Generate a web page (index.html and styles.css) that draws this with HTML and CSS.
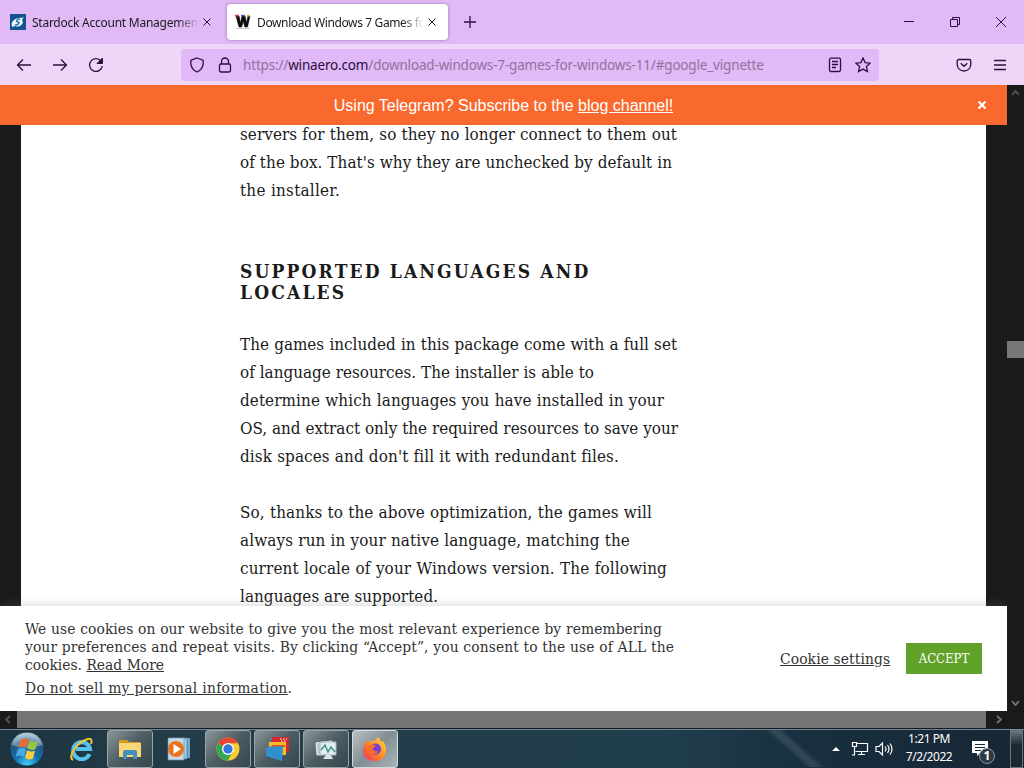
FILE: index.html
```html
<!DOCTYPE html>
<html lang="en">
<head>
  <meta charset="UTF-8" />
  <title>Download Windows 7 Games for Windows 11</title>
  <link rel="stylesheet" href="styles.css">
</head>
<body>
  <div class="tabs">
    <div class="tab">
      <svg class="favicon" viewBox="0 0 16 16"><rect width="16" height="16" fill="#12528f"/><path d="M2 12C0 8 6 3 12 4L14 3L12 6C15 10 9 14 5 12L2 13Z" fill="#e8f6fb"/><path d="M10 5C6 5 6 8 8 8S9 11 5 11" fill="none" stroke="#2379ad" stroke-width="1.5"/></svg>
      <span class="tab-title">Stardock Account Management</span>
      <svg class="close" viewBox="0 0 8 8"><path d="M.5.5l7 7m0-7l-7 7"/></svg>
    </div>
    <div class="tab active">
      <svg class="favicon" viewBox="0 0 16 16"><path d="M1 2h3l1.500 7L7 2h3l1.500 7L13 2h2l-2.500 11h-2.700L8.300 7l-1.600 6H4z" fill="#0b0b0b" stroke="#0b0b0b" stroke-width=".6"/><path d="M0 .8h4v1.700H0z" fill="#d43b45"/><path d="M6 .8h4v1.700H6z" fill="#5a4fc0"/><path d="M12 .8h3v1.700h-3z" fill="#e2b23c"/><path d="M1 14.500h14" stroke="#ccc"/></svg>
      <span class="tab-title">Download Windows 7 Games for</span>
      <svg class="close" viewBox="0 0 8 8"><path d="M.5.5l7 7m0-7l-7 7"/></svg>
    </div>
    <svg class="new-tab" viewBox="0 0 12 12"><path d="M6 0v12M0 6h12"/></svg>
    <div class="window-buttons">
      <svg viewBox="0 0 12 12"><path d="M1 5.500h10"/></svg>
      <svg viewBox="0 0 12 12"><path d="M1.500 3.500h7v7h-7zM3.500 3V1.500h7v7H9"/></svg>
      <svg viewBox="0 0 12 12"><path d="M1 1l10 10M11 1L1 11"/></svg>
    </div>
  </div>

  <div class="toolbar">
    <div class="nav">
      <svg viewBox="0 0 16 16"><path d="M15 8H1.500M7 2.500L1.500 8 7 13.500"/></svg>
      <svg viewBox="0 0 16 16"><path d="M1 8h13.500M9 2.500L14.500 8 9 13.500"/></svg>
      <svg viewBox="0 0 16 16"><path d="M13 4A6.400 6.400 0 1 0 14.300 9"/><path d="M14.500 1v5.500H9z" fill="#2b0f3d" stroke-width="1"/></svg>
    </div>
    <div class="urlbar">
      <svg viewBox="0 0 16 16"><path d="M8 1L14 3.200C15 9 12 13 8 15 4 13 1 9 2 3.200Z"/></svg>
      <svg class="lock" viewBox="0 0 16 16"><rect x="2.500" y="7" width="11" height="8" rx="1.500"/><path d="M4.500 7V4.500a3.500 3.500 0 0 1 7 0V7"/></svg>
      <span class="url">https://<b>winaero.com</b>/download-windows-7-games-for-windows-11/#google_vignette</span>
      <svg viewBox="0 0 16 16"><rect x="2.500" y="1.200" width="11" height="13.300" rx="1.500"/><path d="M5 4.500h6M5 7.500h6M5 10.500h4"/></svg>
      <svg class="star" viewBox="0 0 16 16"><path d="M8 1l2.100 4.600 5 .6-3.700 3.400 1 5L8 12.100l-4.400 2.500 1-5L.9 6.200l5-.6z"/></svg>
    </div>
    <div class="tools">
      <svg viewBox="0 0 16 16"><path d="M2.700 2.500h10.600q1.500 0 1.500 1.500v3.500a6.800 6.500 0 0 1-13.600 0V4q0-1.500 1.500-1.500zM4.700 6.300L8 9.300l3.300-3"/></svg>
      <svg viewBox="0 0 16 16"><path d="M2 3.500h12M2 8h12M2 12.500h12"/></svg>
    </div>
  </div>

  <div class="viewport">
    <div class="page">
      <div class="banner">Using Telegram? Subscribe to the&nbsp;<a>blog channel!</a>
        <svg class="banner-close" viewBox="0 0 10 10"><path d="M1.500 1.500l7 7m0-7l-7 7"/></svg>
      </div>
      <div class="article">
        <p class="first">
          <span>servers for them, so they no longer connect to them out</span>
          <span>of the box. That's why they are unchecked by default in</span>
          <span>the installer.</span>
        </p>
        <h2>Supported languages and<br>locales</h2>
        <p class="resources">
          <span>The games included in this package come with a full set</span>
          <span>of language resources. The installer is able to</span>
          <span>determine which languages you have installed in your</span>
          <span>OS, and extract only the required resources to save your</span>
          <span>disk spaces and don't fill it with redundant files.</span>
        </p>
        <p class="locales">
          <span>So, thanks to the above optimization, the games will</span>
          <span>always run in your native language, matching the</span>
          <span>current locale of your Windows version. The following</span>
          <span>languages are supported.</span>
        </p>
      </div>
      <div class="cookies">
        <div class="cookie-text">
          <p class="consent">
            <span>We use cookies on our website to give you the most relevant experience by remembering</span>
            <span>your preferences and repeat visits. By clicking “Accept”, you consent to the use of ALL the</span>
            <span>cookies. <a>Read More</a></span>
          </p>
          <p class="no-sell"><span><a>Do not sell my personal information</a>.</span></p>
        </div>
        <a class="settings">Cookie settings</a>
        <div class="accept">ACCEPT</div>
      </div>
    </div>
    <div class="vscroll">
      <svg class="dim" viewBox="0 0 9 6"><path d="M1 5l3.500-4L8 5"/></svg>
      <div class="vthumb"></div>
      <svg viewBox="0 0 9 6"><path d="M1 1l3.500 4L8 1"/></svg>
    </div>
    <div class="hscroll">
      <svg class="dim" viewBox="0 0 6 9"><path d="M5 1L1 4.500 5 8"/></svg>
      <div class="hthumb"></div>
      <svg viewBox="0 0 6 9"><path d="M1 1l4 3.500L1 8"/></svg>
    </div>
  </div>

  <div class="taskbar">
    <div class="start">
      <svg viewBox="0 0 36 36">
        <defs>
          <radialGradient id="orb" cx=".5" cy=".95" r=".9"><stop offset="0" stop-color="#3fd0f5"/><stop offset=".4" stop-color="#1470b0"/><stop offset=".75" stop-color="#24557c"/><stop offset="1" stop-color="#a9c3d2"/></radialGradient>
        </defs>
        <circle cx="18" cy="18" r="17" fill="url(#orb)" stroke="#18394f"/>
        <path d="M3 14a15.500 15.500 0 0 1 30 0Q18 20 3 14z" fill="#cde2ea" opacity=".4"/>
        <path d="M12 9q4-2.500 7.500-.5l-2 8q-4-2-8 0z" fill="#ee6a2c"/>
        <path d="M20.500 9.500q4 2.500 8.500.5l-2.500 8q-4 2-8-.5z" fill="#97c83c"/>
        <path d="M9 18q4-2 8 0l-2 8q-4-2.500-8.500-.5z" fill="#4ba9e4"/>
        <path d="M18 19q4 2.500 8 .5l-2 8q-4 2-8-.5z" fill="#fbcf3b"/>
      </svg>
    </div>
    <div class="task">
      <svg viewBox="0 0 24 24"><path d="M20.500 17A8.500 8.500 0 1 1 21 12H7" fill="none" stroke="#54c3ef" stroke-width="4"/><path d="M4 23C-2 20 8 5 19 2c4-1 4 2 3 5" fill="none" stroke="#f2c52f" stroke-width="2"/></svg>
    </div>
    <div class="task open">
      <svg viewBox="0 0 24 24"><path d="M1 3h8l2 2h11v3H1z" fill="#d79b22"/><path d="M1 6h22v14H1z" fill="#f9d676"/><path d="M5 22v-7q0-2 2-2h10q2 0 2 2v7h-4v-4H9v4z" fill="#438fc0"/></svg>
    </div>
    <div class="task">
      <svg viewBox="0 0 24 24"><path d="M9 1h14v20H9z" fill="#6fa9cc"/><path d="M5 1h15v21H5z" fill="#a4cde3" stroke="#4b7890" stroke-width=".7"/><path d="M1 1h16v22H1z" fill="#c7dce8" stroke="#688ca2" stroke-width=".7"/><circle cx="9" cy="12" r="8" fill="#e97420"/><path d="M6.500 7l7.500 5-7.500 5z" fill="#fff"/></svg>
    </div>
    <div class="task open">
      <svg viewBox="0 0 24 24"><circle cx="12" cy="12" r="11.500" fill="#f9cd31"/><path d="M12 12L2 6.200A11.500 11.500 0 0 1 22 6.200H12z" fill="#e64435"/><path d="M2 6.200A11.500 11.500 0 0 0 11.500 23.500L17 15l-5-3z" fill="#36a552"/><circle cx="12" cy="12" r="6" fill="#fff"/><circle cx="12" cy="12" r="4.700" fill="#3478e2"/></svg>
    </div>
    <div class="task open">
      <svg viewBox="0 0 24 24"><path d="M7 0h17v15H7z" fill="#d32b2d"/><path d="M15 2h7M16 4h6" stroke="#fff" stroke-dasharray="1.500 1.500"/><path d="M4 5h17v13H4z" fill="#f4bd25"/><path d="M7 8h13v2H7z" fill="#d9562b"/><path d="M1 11l6-2 2 1 9-1-1 15L1 19z" fill="#318fcd"/></svg>
    </div>
    <div class="task open">
      <svg viewBox="0 0 24 24"><path d="M2 6l16-2v13l-15 1z" fill="#b9cbd0" stroke="#eaf2f3"/><path d="M6 5h16v13H6z" fill="#e1edef" stroke="#a4b7bd"/><path d="M7 13l4-5 3 7 3-5 4 5" fill="none" stroke="#388b87" stroke-width="1.400"/><path d="M12 18h5l2 4H9z" fill="#dce6e9"/></svg>
    </div>
    <div class="task current">
      <svg viewBox="0 0 24 24">
        <defs><linearGradient id="fox" x1="1" y1="0" x2="0" y2="1"><stop offset="0" stop-color="#ffe13d"/><stop offset=".5" stop-color="#ff8a25"/><stop offset="1" stop-color="#f52b5b"/></linearGradient></defs>
        <path d="M3 5l2-2 1 2q3-2 6-1 1-3 4-4 0 3 3 5l1-1c6 8 3 20-8 20C0 24-3 13 3 5z" fill="url(#fox)"/><circle cx="12.500" cy="12" r="5.500" fill="#7541cf"/><path d="M5 9q4-3 8 0l-3 2q0 4 5 3c-1 4-8 4-10-1z" fill="#f66c2d"/>
      </svg>
    </div>
    <div class="glare"></div>
    <div class="tray">
      <svg class="arrow" viewBox="0 0 8 4"><path d="M0 4l4-4 4 4z" fill="#fff"/></svg>
      <svg class="network" viewBox="0 0 18 14"><path d="M5.500 1.500h11v8H4.500M10.500 9.500v3M7 12.500h7M1.500.5h4v4h-4zM3.500 4.500V13M1 13h3" fill="none" stroke="#fff" stroke-width="1.200"/></svg>
      <svg class="sound" viewBox="0 0 18 14"><path d="M1 4.500h3l3.500-3.500v12L4 9.500H1zM10 4.500q2 2.500 0 5M12.500 3q3 4 0 8M15 1.500q4 5.500 0 11" fill="none" stroke="#fff" stroke-width="1.200"/></svg>
      <div class="clock">1:21 PM<br>7/2/2022</div>
      <div class="notify">
        <svg viewBox="0 0 16 15"><path d="M0 0h16v12H8l-3 3v-3H0z" fill="#fff"/><path d="M3 3.500h10M3 6.500h10M3 9.500h6" stroke="#152733"/></svg>
        <span class="count">1</span>
      </div>
      <div class="show-desktop"></div>
    </div>
  </div>
</body>
</html>
```
FILE: styles.css
```css
* {
  box-sizing: border-box;
}

body {
  margin: 0;
  width: 1024px;
  height: 768px;
  overflow: hidden;
  display: flex;
  flex-direction: column;
  font-family: "Noto Sans", sans-serif;
  color: #1a1a1a;
}

svg {
  display: block;
  flex: none;
}

/* Tabs */
.tabs {
  height: 44px;
  flex: none;
  display: flex;
  align-items: center;
  background: #e0b9f6;
  padding-left: 2px;
}

.tab {
  height: 36px;
  width: 221px;
  display: flex;
  align-items: center;
  padding: 0 12px 0 8px;
  border-radius: 4px;
  font-size: 12px;
}

.tab.active {
  background: #fff;
  margin-left: 4px;
  box-shadow: 0 0 3px rgba(80, 30, 110, 0.5);
}

.favicon {
  width: 16px;
  height: 16px;
  margin-right: 6px;
}

.tab-title {
  flex: 1;
  overflow: hidden;
  white-space: nowrap;
  letter-spacing: -0.25px;
  -webkit-mask-image: linear-gradient(to left, transparent, #000 22px);
  mask-image: linear-gradient(to left, transparent, #000 22px);
}

.active .tab-title {
  letter-spacing: -0.37px;
}

.close {
  width: 8px;
  height: 8px;
  margin-left: 4px;
}

.close path,
.new-tab path,
.window-buttons path {
  fill: none;
  stroke: #2b0f3d;
}

.new-tab {
  width: 12px;
  height: 12px;
  margin-left: 16px;
}

.new-tab path {
  stroke-width: 1.3;
}

.window-buttons {
  margin-left: auto;
  margin-right: 17px;
  display: flex;
  gap: 34px;
}

.window-buttons svg {
  width: 12px;
  height: 12px;
}

/* Toolbar */
.toolbar {
  height: 41px;
  flex: none;
  display: flex;
  align-items: center;
  background: #efd6f9;
}

.toolbar svg {
  width: 16px;
  height: 16px;
  fill: none;
  stroke: #2b0f3d;
  stroke-width: 1.3;
}

.nav {
  display: flex;
  gap: 20px;
  padding-left: 16px;
  width: 181px;
}

.urlbar {
  width: 698px;
  height: 32px;
  display: flex;
  align-items: center;
  padding: 0 8px;
  border-radius: 4px;
  background: #e0b9f6;
}

.lock {
  margin-left: 12px;
}

.star {
  margin-left: 12px;
}

.url {
  flex: 1;
  margin-left: 10px;
  font-size: 13.5px;
  letter-spacing: -0.17px;
  color: #94709f;
  white-space: nowrap;
}

.url b {
  font-weight: normal;
  color: #2b0f3d;
}

.tools {
  margin-left: auto;
  margin-right: 16px;
  display: flex;
  gap: 20px;
}

/* Page */
.viewport {
  height: 643px;
  flex: none;
  display: grid;
  grid-template-columns: 1007px 17px;
  grid-template-rows: 626px 17px;
  background: #1a1a1a;
}

.page {
  display: flex;
  flex-direction: column;
  overflow: hidden;
}

.banner {
  height: 40px;
  flex: none;
  display: flex;
  align-items: center;
  justify-content: center;
  position: relative;
  padding-top: 2px;
  background: #f9692d;
  color: #fff;
  font: 16px "Liberation Sans", sans-serif;
}

.banner a {
  text-decoration: underline;
}

.banner-close {
  position: absolute;
  right: 20px;
  top: 15px;
  width: 10px;
  height: 10px;
}

.banner-close path {
  stroke: #fff;
  stroke-width: 2.2;
}

.article {
  height: 481px;
  flex: none;
  overflow: hidden;
  margin: 0 21px;
  padding-left: 219px;
  background: #fff;
  font: 16.9px/28px "DejaVu Serif Condensed", "DejaVu Serif", serif;
  font-stretch: condensed;
}

.article p {
  margin: 0 0 28px;
}

.article span,
.cookie-text span {
  display: block;
  white-space: nowrap;
  text-align-last: justify;
}

.article p.first {
  margin: -5px 0 0;
  letter-spacing: 0.07px;
}

.first span:nth-child(1) { width: 437px; }
.first span:nth-child(2) { width: 432px; }
.first span:nth-child(3) { width: 100px; letter-spacing: 0.25px; }

.resources span:nth-child(1) { width: 437px; }
.resources span:nth-child(2) { width: 354px; }
.resources span:nth-child(3) { width: 424px; letter-spacing: 0.1px; }
.resources span:nth-child(4) { width: 438px; }
.resources span:nth-child(5) { width: 379px; letter-spacing: 0.13px; }

.locales { letter-spacing: 0.14px; }
.locales span:nth-child(1) { width: 412px; }
.locales span:nth-child(2) { width: 390px; }
.locales span:nth-child(3) { width: 427px; }
.locales span:nth-child(4) { width: 198px; letter-spacing: 0.05px; }

.article h2 {
  margin: 57px 0 27px;
  font-size: 19px;
  line-height: 21px;
  letter-spacing: 2.15px;
  text-transform: uppercase;
}

.cookies {
  height: 105px;
  flex: none;
  display: flex;
  align-items: center;
  position: relative;
  padding: 0 25px;
  background: #fff;
  box-shadow: 0 -1px 10px rgba(120, 120, 120, 0.3);
  color: #333;
  font: 15.4px/18px "DejaVu Serif Condensed", "DejaVu Serif", serif;
  font-stretch: condensed;
}

.cookies a {
  text-decoration: underline;
}

.cookie-text {
  width: 755px;
}

.cookie-text p {
  margin: 0;
}

.consent span:nth-child(1) { width: 637px; letter-spacing: 0.08px; }
.consent span:nth-child(2) { width: 649px; letter-spacing: 0.1px; }
.consent span:nth-child(3) { width: 139px; }

.cookie-text .no-sell {
  width: 266px;
  margin-top: 5px;
  letter-spacing: 0.3px;
}

.no-sell span {
  text-align-last: left;
}

.settings {
  letter-spacing: 0.12px;
}

.accept {
  width: 76px;
  height: 31px;
  margin-left: auto;
  background: #61a229;
  color: #fff;
  font-size: 13px;
  line-height: 31px;
  text-align: center;
}

/* Scrollbars */
.vscroll {
  display: flex;
  flex-direction: column;
  align-items: center;
  padding: 5px 0;
}

.vscroll svg {
  width: 9px;
  height: 6px;
}

.vthumb {
  width: 17px;
  height: 17px;
  margin-top: 245px;
  margin-bottom: auto;
  background: #777;
}

.hscroll {
  display: flex;
  align-items: center;
  padding: 0 5px;
}

.hscroll svg {
  width: 6px;
  height: 9px;
}

.hthumb {
  width: 969px;
  height: 17px;
  margin: 0 10px 0 6px;
  flex: none;
  background: #747474;
}

.vscroll path,
.hscroll path {
  fill: none;
  stroke: #777;
  stroke-width: 1.8;
}

.viewport .dim path {
  stroke: #555;
}

/* Taskbar */
.taskbar {
  height: 40px;
  flex: none;
  display: flex;
  align-items: center;
  gap: 3px;
  border-top: 1px solid #0f1b26;
  box-shadow: inset 0 1px #77858f;
  background: linear-gradient(90deg, #1d343f, #243e49 20%, #213e4c 65%, #18303f 78%, #172635);
}

.start {
  width: 55px;
  padding-left: 9px;
}

.start svg {
  width: 36px;
  height: 36px;
}

.task {
  width: 46px;
  height: 38px;
  display: flex;
  align-items: center;
  justify-content: center;
  border-radius: 3px;
}

.task svg {
  width: 24px;
  height: 24px;
}

.task.open {
  border: 1px solid #98a4a8;
  background: linear-gradient(135deg, #8b9698, #4b5c62 50%, #35474f);
}

.task.current {
  border: 1px solid #d3dadc;
  background: linear-gradient(135deg, #b9c0c2, #818e93 50%, #aab4b7);
}

.glare {
  width: 60px;
  height: 37px;
  margin-left: 364px;
  background: linear-gradient(42deg, transparent 40%, rgba(120, 135, 145, 0.25) 47%, rgba(120, 135, 145, 0.25) 53%, transparent 60%);
}

.tray {
  flex: 1;
  display: flex;
  align-items: center;
  color: #fff;
}

.arrow {
  width: 8px;
  height: 4px;
  margin-left: 4px;
}

.network {
  width: 18px;
  height: 14px;
  margin-left: 11px;
}

.sound {
  width: 18px;
  height: 14px;
  margin-left: 6px;
}

.clock {
  width: 56px;
  margin-left: 8px;
  margin-top: -2px;
  font-size: 12px;
  line-height: 18px;
  letter-spacing: -0.45px;
  text-align: center;
  white-space: nowrap;
}

.notify {
  position: relative;
  margin-left: 15px;
}

.notify svg {
  width: 16px;
  height: 15px;
}

.count {
  position: absolute;
  left: 7px;
  top: 7px;
  width: 16px;
  height: 16px;
  border: 1px solid #8e979d;
  border-radius: 50%;
  background: #2c3943;
  font-size: 12px;
  font-weight: bold;
  line-height: 14px;
  text-align: center;
}

.show-desktop {
  width: 13px;
  height: 38px;
  margin-left: auto;
  margin-right: 1px;
  border: 1px solid #69757e;
  background: linear-gradient(#6b747b, #1b2731 40%);
}
```
